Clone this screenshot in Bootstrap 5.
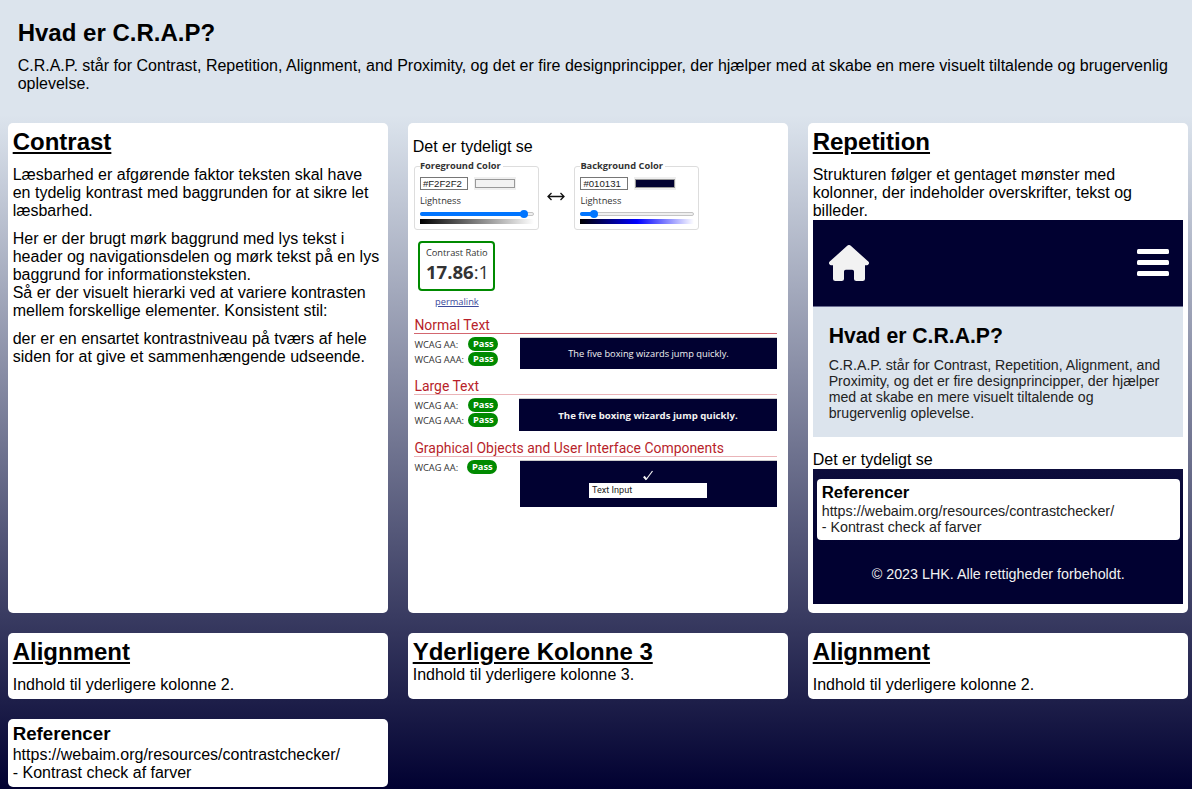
<!DOCTYPE html>
<html lang="da">
<head>
<meta charset="utf-8">
<meta name="viewport" content="width=device-width, initial-scale=1">
<title>Hvad er C.R.A.P?</title>
<link rel="stylesheet" href="https://cdn.jsdelivr.net/npm/bootstrap@5.3.0/dist/css/bootstrap.min.css">
<style>
body{font:16px/18px "Liberation Sans",Arial,sans-serif;color:#000;min-height:789px;background:linear-gradient(#dce4ed 0,#dce4ed 115px,#010131 789px) no-repeat}
h1,h2{font-size:24px;line-height:27px;font-weight:700;margin:0}
h3{font-size:18.72px;line-height:21px;font-weight:700;margin:-1px 0 2px}
p{margin:0}
.intro{height:123px;padding:19px 18px 0 17.7px}
.intro p{margin-top:11px}
.tiles{display:grid;grid-template-columns:repeat(3,380px);grid-template-rows:490px 66px 68px;gap:20px;margin-left:8px}
.tile{background:#fff;border-radius:5px;padding:5px 5px 5px 4.7px}
.tile h2{text-decoration:underline}
.tile>p{margin-top:10px}
.tile>h2+p{margin-top:11px}
/* contrast checker */
.checker{font:9.3px/12px "Open Sans",sans-serif;color:#333;padding-left:1.7px;width:364.3px;white-space:nowrap}
.picker{width:125px;height:64px;border:1px solid #ddd;border-radius:3px;padding-left:4.5px}
.picker+svg+.picker{padding-left:5px}
.picker .cap{display:table;background:#fff;font-weight:700;margin-top:-7px;padding-right:2px;line-height:12px}
.hexbox{width:48px;height:13px;border:1px solid #767676;font:9.65px/11px "Liberation Sans",sans-serif;padding-left:2px;color:#222}
.swatch{width:42px;height:13px;background:#efefef;padding:2px 1px}
.swatch div{height:9px;border:1px solid #999}
.slider{height:4px;width:114px;border:1px solid #c4c4c4;border-radius:2px;background:#efefef;position:relative;margin-top:6px}
.slider .fill{position:absolute;left:-1px;top:-1px;height:4px;border-radius:2px;background:#0075ff}
.slider .fill::after{content:"";position:absolute;right:-4px;top:-2px;width:8px;height:8px;border-radius:50%;background:#0075ff}
.ramp{height:5px;width:114px;margin-top:3px}
.score{width:77px;height:50px;border:2px solid #008a00;border-radius:4px;margin:11px 0 0 4px;padding:4px 0 0 5.5px}
.score .num{font-size:18.6px;line-height:26px}
.plink{width:77px;margin-left:4px;margin-top:5px;color:#3c4a9c;text-decoration:underline;text-align:center}
.checker h4{font:13.95px/19px Roboto,sans-serif;color:#b81f2b;margin:8px 0 0;border-bottom:1px solid #eab4b8;height:18px}
.checker .score~h4:nth-of-type(1){border-color:#d3666f;line-height:18px}
.result{margin-top:3px}
.lbl{width:54px;line-height:15px;height:15px}
.pass{width:30px;height:14px;border-radius:7px;background:#008a00;color:#fff;font-weight:700;text-align:center;line-height:14px;margin-bottom:1px}
.demo{background:#010131;width:257px;color:#f2f2f2;border-top:1px solid #ccc;margin-left:auto}
.field{width:118px;height:15px;background:#fff;color:#222;font:9.1px/14px Roboto,sans-serif;padding-left:2.5px;text-align:left}
/* page previews */
.shot{width:370px}
.navshot{background:#010131;height:87px;padding:0 14px 0 16px;border-bottom:1px solid #6a6c91}
.introshot{background:#dce4ed;height:130px;padding:17px 16px;color:#222;font-size:14.15px;line-height:16px}
.introshot .ttl{font-size:21.2px;line-height:24px;font-weight:700;color:#000;margin-bottom:9px}
.footshot{height:135px;background:linear-gradient(#0d0d3c,#010131 75px);padding:10px 3px 0 4px;color:#f2f2f2;font-size:14.3px;line-height:16px}
.footshot .refs{height:61px;background:#fff;border-radius:4px;color:#222;padding:4px 5px}
.footshot .ttl{font-size:16.8px;line-height:20px;font-weight:700;color:#000;margin-bottom:-.5px}
</style>
</head>
<body>
<header class="intro">
  <h1>Hvad er C.R.A.P?</h1>
  <p>C.R.A.P. står for Contrast, Repetition, Alignment, and Proximity, og det er fire designprincipper, der hjælper med at skabe en mere visuelt tiltalende og brugervenlig oplevelse.</p>
</header>
<main class="tiles">
  <section class="tile">
    <h2>Contrast</h2>
    <p>Læsbarhed er afgørende faktor teksten skal have en tydelig kontrast med baggrunden for at sikre let læsbarhed.</p>
    <p>Her er der brugt mørk baggrund med lys tekst i header og navigationsdelen og mørk tekst på en lys baggrund for informationsteksten.<br>Så er der visuelt hierarki ved at variere kontrasten mellem forskellige elementer. Konsistent stil:</p>
    <p>der er en ensartet kontrastniveau på tværs af hele siden for at give et sammenhængende udseende.</p>
  </section>

  <section class="tile">
    <p>Det er tydeligt se</p>
    <div class="checker">
      <div class="d-flex" style="padding-top:10px">
        <div class="picker">
          <div class="cap">Foreground Color</div>
          <div class="d-flex mb-1" style="margin-top:5px;gap:6px"><div class="hexbox">#F2F2F2</div><div class="swatch"><div style="background:#f2f2f2"></div></div></div>
          <div style="padding-top:1px;margin-bottom:-1px">Lightness</div>
          <div class="slider"><div class="fill" style="width:104px"></div></div>
          <div class="ramp" style="background:linear-gradient(90deg,#000,#fff)"></div>
        </div>
        <svg style="margin:24px 9px 0 8px" width="18" height="12" viewBox="0 0 18 12" fill="none" stroke="#111" stroke-width="1.3"><path d="M1 6.500h16M4.500 3 1 6.500 4.500 10M13.500 3 17 6.500 13.500 10"/></svg>
        <div class="picker">
          <div class="cap">Background Color</div>
          <div class="d-flex mb-1" style="margin-top:5px;gap:6px"><div class="hexbox">#010131</div><div class="swatch"><div style="background:#010131"></div></div></div>
          <div style="padding-top:1px;margin-bottom:-1px">Lightness</div>
          <div class="slider"><div class="fill" style="width:14px"></div></div>
          <div class="ramp" style="background:linear-gradient(90deg,#000,#00f 50%,#fff)"></div>
        </div>
      </div>
      <div class="score"><div>Contrast Ratio</div><div class="num"><b>17.86</b>:1</div></div>
      <div class="plink">permalink</div>
      <h4>Normal Text</h4>
      <div class="d-flex result">
        <div class="lbl">WCAG AA:<br>WCAG AAA:</div>
        <div><div class="pass">Pass</div><div class="pass">Pass</div></div>
        <div class="demo d-flex align-items-center justify-content-center" style="height:32px">The five boxing wizards jump quickly.</div>
      </div>
      <h4>Large Text</h4>
      <div class="d-flex result">
        <div class="lbl">WCAG AA:<br>WCAG AAA:</div>
        <div><div class="pass">Pass</div><div class="pass">Pass</div></div>
        <div class="demo d-flex align-items-center justify-content-center fw-bold" style="height:33px;width:258px;font-size:9.65px;padding-top:1px">The five boxing wizards jump quickly.</div>
      </div>
      <h4>Graphical Objects and User Interface Components</h4>
      <div class="d-flex result">
        <div class="lbl" style="width:53px">WCAG AA:</div>
        <div><div class="pass">Pass</div></div>
        <div class="demo d-flex flex-column align-items-center" style="height:47px">
          <svg style="margin-top:9px" width="11" height="11" viewBox="0 0 11 11" fill="none" stroke="#f2f2f2"><path d="M.800 6.500 3.500 9.500" stroke-width="2"/><path d="M3.200 9.500 9.500 1" stroke-width="1.200"/></svg>
          <div class="field" style="margin-top:2px">Text Input</div>
        </div>
      </div>
    </div>
  </section>

  <section class="tile">
    <h2>Repetition</h2>
    <p>Strukturen følger et gentaget mønster med kolonner, der indeholder overskrifter, tekst og billeder.</p>
    <div class="shot">
      <div class="navshot d-flex align-items-center justify-content-between">
        <svg class="mb-1" style="margin-top:3px" width="40" height="36" viewBox="0 0 40 36" fill="#f2f2f2"><path d="M18.500.600a2.300 2.300 0 0 1 3 0L39.300 16.500c1.500 1.400.6 3.700-1.300 3.700h-2V33.500q0 2.500-2.500 2.500h-6q-2.500 0-2.500-2.500V26.500q0-1.800-1.800-1.800h-6.400q-1.800 0-1.800 1.800V33.500q0 2.500-2.500 2.500h-6Q4 36 4 33.500V20.200H2C.100 20.200-.800 17.900.700 16.500z"/></svg>
        <svg width="32" height="28" viewBox="0 0 32 28" fill="#fff"><rect y="0" width="32" height="5" rx="1.500"/><rect y="11" width="32" height="5" rx="1.500"/><rect y="22" width="32" height="5" rx="1.500"/></svg>
      </div>
      <div class="introshot">
        <div class="ttl">Hvad er C.R.A.P?</div>
        C.R.A.P. står for Contrast, Repetition, Alignment, and<br>Proximity, og det er fire designprincipper, der hjælper<br>med at skabe en mere visuelt tiltalende og<br>brugervenlig oplevelse.
      </div>
    </div>
    <p style="margin-top:14px">Det er tydeligt se</p>
    <div class="shot footshot">
      <div class="refs"><div class="ttl">Referencer</div>https://webaim.org/resources/contrastchecker/<br>- Kontrast check af farver</div>
      <div class="text-center" style="margin-top:26px">© 2023 LHK. Alle rettigheder forbeholdt.</div>
    </div>
  </section>

  <section class="tile"><h2>Alignment</h2><p>Indhold til yderligere kolonne 2.</p></section>
  <section class="tile"><h2>Yderligere Kolonne 3</h2><div style="padding-top:1px">Indhold til yderligere kolonne 3.</div></section>
  <section class="tile"><h2>Alignment</h2><p>Indhold til yderligere kolonne 2.</p></section>
  <section class="tile"><h3>Referencer</h3>https://webaim.org/resources/contrastchecker/<br>- Kontrast check af farver</section>
</main>
<script src="https://cdn.jsdelivr.net/npm/bootstrap@5.3.0/dist/js/bootstrap.bundle.min.js"></script>
</body>
</html>
